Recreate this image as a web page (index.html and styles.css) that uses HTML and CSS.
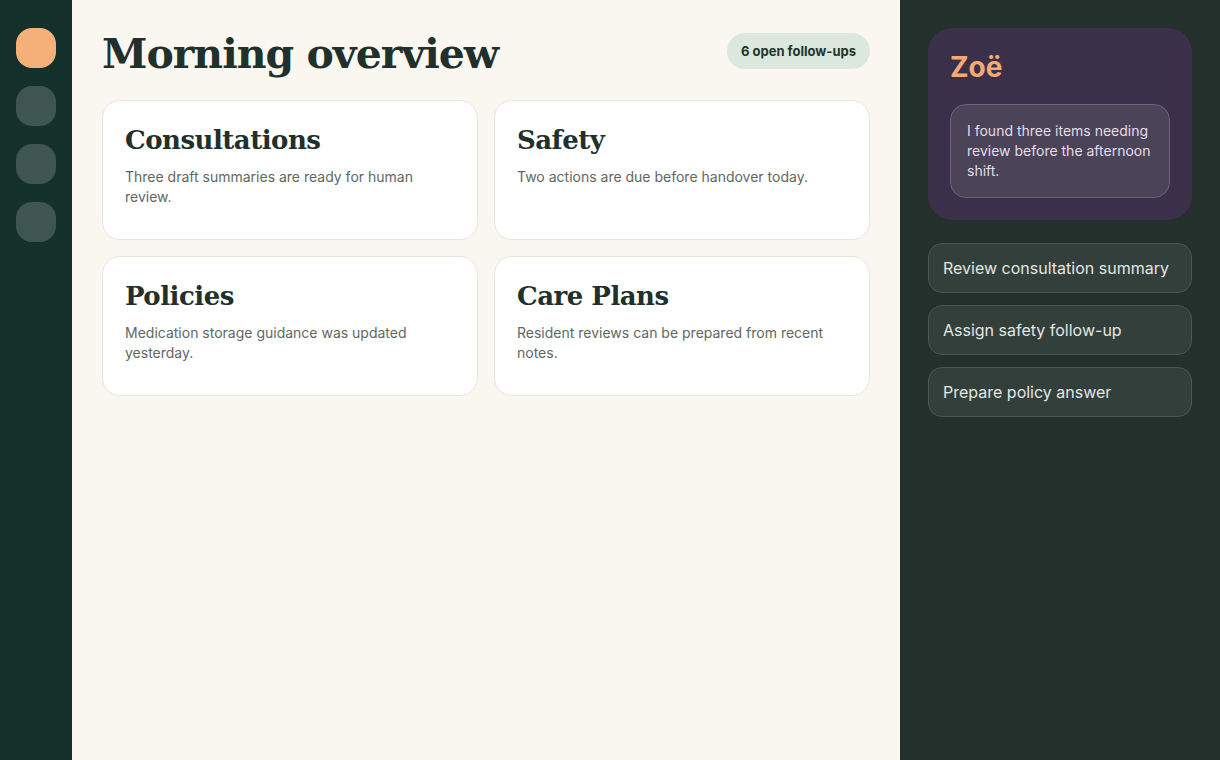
FILE: index.html
```html
<!DOCTYPE html>
<html>
	<head>
		<title>Morning overview</title>
		<link rel="stylesheet" href="styles.css">
	</head>
	<body>
		<div class="app">
			<nav class="rail">
				<span class="dot active"></span>
				<span class="dot"></span>
				<span class="dot"></span>
				<span class="dot"></span>
			</nav>
			<main class="main">
				<header class="top">
					<h1>Morning overview</h1>
					<span class="badge">6 open follow-ups</span>
				</header>
				<div class="cards">
					<div class="card">
						<h2>Consultations</h2>
						<p>Three draft summaries are ready for human review.</p>
					</div>
					<div class="card">
						<h2>Safety</h2>
						<p>Two actions are due before handover today.</p>
					</div>
					<div class="card">
						<h2>Policies</h2>
						<p>Medication storage guidance was updated yesterday.</p>
					</div>
					<div class="card">
						<h2>Care Plans</h2>
						<p>Resident reviews can be prepared from recent notes.</p>
					</div>
				</div>
			</main>
			<aside class="side">
				<div class="assistant">
					<div class="name">Zoë</div>
					<div class="bubble">I found three items needing review before the afternoon shift.</div>
				</div>
				<button class="action">Review consultation summary</button>
				<button class="action">Assign safety follow-up</button>
				<button class="action">Prepare policy answer</button>
			</aside>
		</div>
	</body>
</html>
```

FILE: styles.css
```css
body {
	margin: 0;
	font-family: Inter, "Noto Sans", sans-serif;
}

.app {
	display: flex;
	height: 760px;
}

.rail {
	width: 72px;
	background: #14302a;
	display: flex;
	flex-direction: column;
	align-items: center;
	gap: 18px;
	padding-top: 28px;
	box-sizing: border-box;
}
.dot {
	width: 40px;
	height: 40px;
	border-radius: 16px;
	background: #3e5550;
}
.dot.active { background: #f4b078; }

.main {
	flex: 1;
	background: #faf7f1;
	padding: 28px 30px;
}
.top {
	display: flex;
	justify-content: space-between;
	align-items: flex-start;
	margin-bottom: 20px;
}
.top h1 {
	margin: 0;
	font-family: "DejaVu Serif", serif;
	font-size: 41px;
	line-height: 52px;
	letter-spacing: -1px;
	color: #22302b;
}
.badge {
	margin-top: 5px;
	background: #dce8de;
	color: #22352c;
	font-size: 13px;
	font-weight: 700;
	padding: 10px 14px;
	border-radius: 18px;
	line-height: 16px;
}

.cards {
	display: grid;
	grid-template-columns: 1fr 1fr;
	gap: 16px;
}
.card {
	background: #fff;
	border: 1px solid #e8e5df;
	border-radius: 18px;
	height: 140px;
	box-sizing: border-box;
	padding: 22px 22px;
}
.card h2 {
	margin: 0 0 10px;
	font-family: "DejaVu Serif", serif;
	font-size: 26px;
	line-height: 34px;
	letter-spacing: -0.5px;
	color: #22302b;
}
.card p {
	margin: 0;
	font-size: 14px;
	line-height: 20px;
	color: #5e6863;
}

.side {
	width: 320px;
	background: #24302c;
	padding: 28px;
	box-sizing: border-box;
	display: flex;
	flex-direction: column;
	gap: 12px;
}
.assistant {
	background: #3a3049;
	border-radius: 24px;
	padding: 22px 22px 22px;
	margin-bottom: 11px;
}
.name {
	color: #f4aa72;
	font-size: 28px;
	font-weight: 700;
	line-height: 34px;
	margin-bottom: 20px;
}
.bubble {
	background: #4b4358;
	border: 1px solid #6c647a;
	border-radius: 16px;
	padding: 16px 16px;
	font-size: 14px;
	line-height: 20px;
	color: #e2dde8;
}
.action {
	height: 50px;
	background: #333f3b;
	border: 1px solid #4b5753;
	border-radius: 14px;
	color: #e4e6e2;
	font-family: Inter, sans-serif;
	font-size: 16px;
	text-align: left;
	padding: 0 14px;
}
```
